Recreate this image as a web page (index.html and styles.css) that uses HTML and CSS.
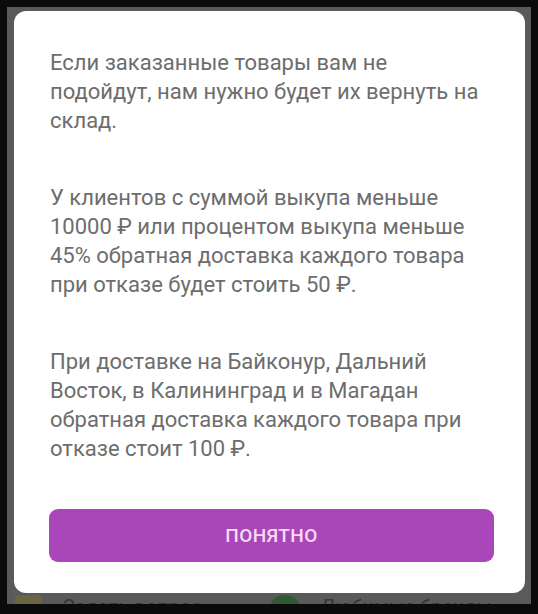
FILE: index.html
```html
<!DOCTYPE html>
<html lang="ru">
<head>
    <meta charset="UTF-8">
    <meta name="viewport" content="width=device-width, initial-scale=1.0">
    <title>Возврат товара</title>
    <link rel="stylesheet" href="styles.css">
</head>
<body>

    <div class="screen">
        <div class="dialog">
            <div class="dialog-text">
                <p>Если заказанные товары вам не подойдут, нам нужно будет их вернуть на склад.</p>
                <p>У клиентов с суммой выкупа меньше 10000 ₽ или процентом выкупа меньше 45% обратная доставка каждого товара при отказе будет стоить 50 ₽.</p>
                <p>При доставке на Байконур, Дальний Восток, в Калининград и в Магадан обратная доставка каждого товара при отказе стоит 100 ₽.</p>
            </div>
            <button class="btn">Понятно</button>
        </div>

        <!-- page behind the overlay -->
        <div class="page-row">
            <div class="page-item">
                <span class="page-icon yellow"></span>
                <span>Задать вопрос</span>
            </div>
            <div class="page-item">
                <span class="page-icon green"></span>
                <span>Любимые бренды</span>
            </div>
        </div>
    </div>

</body>
</html>
```

FILE: styles.css
```css
/* General Styling */
body {
    margin: 0;
    padding: 0;
    background-color: #0b0b0b;
    font-family: Roboto, "Noto Sans", sans-serif;
}

.screen {
    margin: 7px 7px 0 7px;
    height: 597px;
    background-color: #5a5a5a;
    padding: 4px 6px 0 7px;
    box-sizing: border-box;
    overflow: hidden;
}

.dialog {
    background: #ffffff;
    border-radius: 12px;
    height: 582px;
    box-sizing: border-box;
    padding: 37px 31px 31px 35px;
    display: flex;
    flex-direction: column;
}

.dialog-text {
    flex: 1;
    padding: 0 5px 0 1px;
}

.dialog-text p {
    margin: 0;
    font-size: 22px;
    line-height: 29px;
    color: #6d6d6d;
}

.dialog-text p + p {
    margin-top: 48px;
}

.btn {
    flex-shrink: 0;
    height: 53px;
    width: 100%;
    border: none;
    border-radius: 9px;
    background-color: #a946b9;
    color: #f8dcf5;
    font-family: Roboto, sans-serif;
    font-size: 19px;
    font-weight: 500;
    letter-spacing: 0.02em;
    text-transform: uppercase;
    cursor: pointer;
}

.page-row {
    display: flex;
    margin-top: 2px;
    padding-left: 1px;
    color: #363636;
    font-size: 20px;
}

.page-item {
    display: flex;
    align-items: flex-start;
    gap: 21px;
    width: 288px;
}

.page-icon {
    width: 27px;
    height: 26px;
    border-radius: 4px;
}

.page-icon.yellow {
    background-color: #6b6642;
}

.page-icon.green {
    width: 30px;
    background-color: #2f5a35;
    border-radius: 50%;
}
```
